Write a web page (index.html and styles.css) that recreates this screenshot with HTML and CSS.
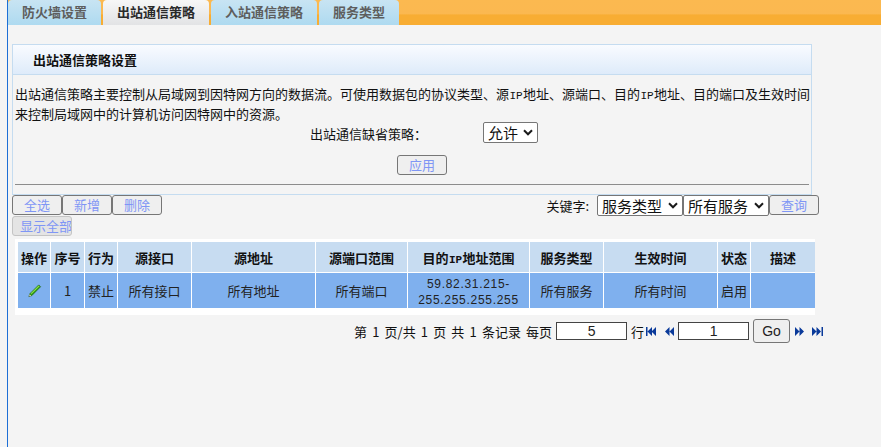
FILE: index.html
```html
<!DOCTYPE html>
<html lang="zh-CN">
<head>
<meta charset="utf-8">
<title>出站通信策略</title>
<link rel="stylesheet" href="styles.css">
</head>
<body>
<div class="page">
  <nav class="tabs">
    <a class="tab w-93">防火墙设置</a>
    <a class="tab active w-106">出站通信策略</a>
    <a class="tab w-106">入站通信策略</a>
    <a class="tab w-80">服务类型</a>
  </nav>
  <section class="panel">
    <h2 class="panel-title">出站通信策略设置</h2>
    <p class="desc">出站通信策略主要控制从局域网到因特网方向的数据流。可使用数据包的协议类型、源<span class="latin">IP</span>地址、源端口、目的<span class="latin">IP</span>地址、目的端口及生效时间来控制局域网中的计算机访问因特网中的资源。</p>
    <div class="policy">
      <label class="policy-label">出站通信缺省策略：</label>
      <div class="sel sel-allow" role="combobox"><span>允许</span><svg class="chev" width="10" height="7" viewBox="0 0 10 7"><path d="M1 1.300l4 4 4-4" fill="none" stroke="#1a1a1a" stroke-width="2"/></svg></div>
    </div>
    <div class="apply-row"><button class="btn btn-apply">应用</button></div>
    <hr class="rule">
  </section>
  <div class="toolbar">
    <div class="tool-left">
      <div class="btn-row">
        <button class="btn">全选</button><button class="btn">新增</button><button class="btn">删除</button>
      </div>
      <button class="btn btn-all" disabled>显示全部</button>
    </div>
    <div class="tool-right">
      <span class="kw">关键字:</span>
      <div class="sel sel-type" role="combobox"><span>服务类型</span><svg class="chev" width="10" height="7" viewBox="0 0 10 7"><path d="M1 1.300l4 4 4-4" fill="none" stroke="#1a1a1a" stroke-width="2"/></svg></div>
      <div class="sel sel-svc" role="combobox"><span>所有服务</span><svg class="chev" width="10" height="7" viewBox="0 0 10 7"><path d="M1 1.300l4 4 4-4" fill="none" stroke="#1a1a1a" stroke-width="2"/></svg></div>
      <button class="btn btn-query">查询</button>
    </div>
  </div>
  <div class="table-wrap">
    <table class="grid">
      <colgroup>
        <col class="c33"><col class="c34"><col class="c33"><col class="c74"><col class="c124"><col class="c92"><col class="c122"><col class="c74"><col class="c114"><col class="c33"><col class="c64">
      </colgroup>
      <thead>
        <tr>
          <th>操作</th><th>序号</th><th>行为</th><th>源接口</th><th>源地址</th><th>源端口范围</th><th>目的<span class="latin">IP</span>地址范围</th><th>服务类型</th><th>生效时间</th><th>状态</th><th>描述</th>
        </tr>
      </thead>
      <tbody>
        <tr>
          <td><svg class="pencil" width="15" height="15" viewBox="0 0 16 16"><path d="M2 14.500l1-3L12.500 2l2 2-9.500 9.500z" fill="#2f9e12" stroke="#1f5f14" stroke-width=".7"/><path d="M4 11L12.500 2.700l.8.8L4.800 11.800z" fill="#8fe04a"/><path d="M2 14.500l.7-2.600 1.900 1.900z" fill="#e8e0c0"/><path d="M2 14.500l.4-1.200.8.800z" fill="#333"/></svg></td>
          <td>1</td><td>禁止</td><td>所有接口</td><td>所有地址</td><td>所有端口</td>
          <td class="ip">59.82.31.215-<br>255.255.255.255</td>
          <td>所有服务</td><td>所有时间</td><td>启用</td><td></td>
        </tr>
      </tbody>
    </table>
  </div>
  <div class="pager">
    <span class="pager-info">第 1 页/共 1 页 共 1 条记录 每页</span>
    <input class="page-input size" value="5">
    <span class="row-unit">行</span>
    <svg class="pg pg-first" width="10" height="9" viewBox="0 0 10 9"><path d="M0 0h1.500v9H0zM6 0v9L1.500 4.500zM10 0v9L5.500 4.500z" fill="#0a3a9a"/></svg>
    <svg class="pg pg-prev" width="9" height="9" viewBox="0 0 9 9"><path d="M4.500 0v9L0 4.500zM9 0v9L4.500 4.500z" fill="#0a3a9a"/></svg>
    <input class="page-input cur" value="1">
    <button class="go">Go</button>
    <svg class="pg pg-next" width="9" height="9" viewBox="0 0 9 9"><path d="M0 0v9l4.500-4.500zM4.500 0v9L9 4.500z" fill="#0a3a9a"/></svg>
    <svg class="pg pg-last" width="11" height="9" viewBox="0 0 11 9"><path d="M0 0v9l4.500-4.500zM4.500 0v9L9 4.500zM9.500 0H11v9H9.500z" fill="#0a3a9a"/></svg>
  </div>
</div>
</body>
</html>
```
FILE: styles.css
```css
* { box-sizing: border-box; }
html, body { margin: 0; height: 100%; }
body {
  background: #f4f4f4;
  font-family: "Noto Sans CJK SC", "Liberation Sans", sans-serif;
  font-size: 13px;
  color: #111;
  padding-left: 7px;
  overflow: hidden;
}
.page {
  border-left: 1px solid #1d6fd6;
  height: 100%;
  background: #f4f4f4;
}
.latin { font-family: "Liberation Mono", monospace; font-size: 11px; margin: 0 .4px; }

.tabs {
  display: flex;
  gap: 2px;
  height: 25px;
  background: linear-gradient(#fbb950 0, #fbb850 55%, #f8ad33 60%, #f8ad33 100%);
}
.tab {
  height: 25px;
  border-radius: 4px 4px 0 0;
  background: linear-gradient(#c8e4f3, #aedaf0);
  color: #5e5e5e;
  font-weight: 700;
  line-height: 24px;
  text-align: center;
}
.tab.active {
  background: linear-gradient(#f7f7f7, #e2e3e5);
  color: #2a2a2a;
}
.w-93 { width: 93px; }
.w-106 { width: 106px; }
.w-80 { width: 80px; }

.panel {
  width: 800px;
  height: 151px;
  margin: 19px 0 0 4px;
  border: 1px solid #c5dcf0;
}
.panel-title {
  margin: 0;
  height: 30px;
  padding-left: 20px;
  font-size: 13px;
  font-weight: 700;
  line-height: 30px;
  color: #111;
  background: linear-gradient(#f9fbff, #deebfa);
  border-bottom: 1px solid #c5dcf0;
}
.desc {
  margin: 0;
  padding: 10px 0 0 2px;
  line-height: 18px;
  height: 53px;
}
.policy {
  display: flex;
  align-items: center;
  height: 22px;
  margin-top: -6px;
  padding-left: 297px;
}
.policy-label { width: 173px; }
.sel {
  display: flex;
  align-items: center;
  justify-content: space-between;
  flex: none;
  height: 21px;
  padding: 0 4px 0 4px;
  font-size: 15px;
  line-height: 19px;
  color: #111;
  background: #fff;
  border: 1px solid #767676;
  border-radius: 2px;
}
.chev { flex: none; }
.sel-allow { width: 55px; margin-bottom: 2px; }
.apply-row { display: flex; justify-content: center; margin-top: 11px; padding-left: 20px; }
.btn {
  width: 50px;
  height: 20px;
  padding: 0;
  font-family: inherit;
  font-size: 13px;
  line-height: 18px;
  color: #7f96f5;
  background: #efefef;
  border: 1px solid #767676;
  border-radius: 3px;
}
.rule {
  margin: 9px 2px 0;
  border: 0;
  border-top: 1px solid #8c8c8c;
}

.toolbar {
  display: flex;
  justify-content: space-between;
  margin-left: 4px;
  width: 807px;
}
.btn-row { display: flex; }
.btn-all {
  display: block;
  width: 60px;
  margin-top: 1px;
  padding-left: 7px;
  text-align: left;
  white-space: nowrap;
  overflow: hidden;
  border-color: #c4c4c4;
  background: #e4e4e4;
}
.tool-right { display: flex; align-items: flex-start; }
.kw { margin-right: 8px; line-height: 21px; }
.sel-type { width: 86px; }
.sel-svc { width: 86px; }

.table-wrap {
  width: 800px;
  height: 76px;
  margin: 3px 0 0 7px;
  padding: 3px 0 0 3px;
  background: #fff;
}
.grid {
  table-layout: fixed;
  width: 797px;
  border-collapse: separate;
  border-spacing: 0;
}
.c33 { width: 33px; }
.c34 { width: 34px; }
.c74 { width: 74px; }
.c124 { width: 124px; }
.c92 { width: 92px; }
.c122 { width: 122px; }
.c114 { width: 114px; }
.c64 { width: 64px; }
.grid th, .grid td {
  padding: 0;
  text-align: center;
  border-right: 1px solid #fff;
}
.grid th:last-child, .grid td:last-child { border-right: 0; }
.grid th {
  height: 31px;
  background: #c7dcf1;
  font-weight: 700;
  border-bottom: 1px solid #fff;
}
.grid td {
  height: 35px;
  padding-bottom: 1px;
  background: #7fb0ee;
  color: #222;
}
.grid td.ip {
  padding: 3px 0 0;
  font-family: "Liberation Sans", sans-serif;
  font-size: 12px;
  letter-spacing: .7px;
  line-height: 16px;
}
.pencil { display: block; margin: 0 auto; }

.pager {
  display: flex;
  align-items: center;
  height: 24px;
  margin-top: 4px;
  padding-left: 346px;
}
.pager-info { word-spacing: 2.250px; }
.page-input {
  width: 71px;
  height: 18px;
  padding: 0;
  margin-left: 4px;
  text-align: center;
  font-family: "Liberation Sans", sans-serif;
  font-size: 14px;
  color: #222;
  border: 1px solid #444;
  background: #fff;
  border-radius: 0;
}
.row-unit { margin-left: 4px; }
.pg { flex: none; margin-left: 2px; }
.pg-prev { margin-left: 9px; }
.cur { margin-left: 4px; }
.go {
  width: 37px;
  height: 24px;
  margin-left: 4px;
  padding: 0;
  font-family: "Liberation Sans", sans-serif;
  font-size: 14px;
  color: #222;
  background: #efefef;
  border: 1px solid #767676;
  border-radius: 3px;
}
.pg-next { margin-left: 5px; }
.pg-last { margin-left: 8px; }
```
